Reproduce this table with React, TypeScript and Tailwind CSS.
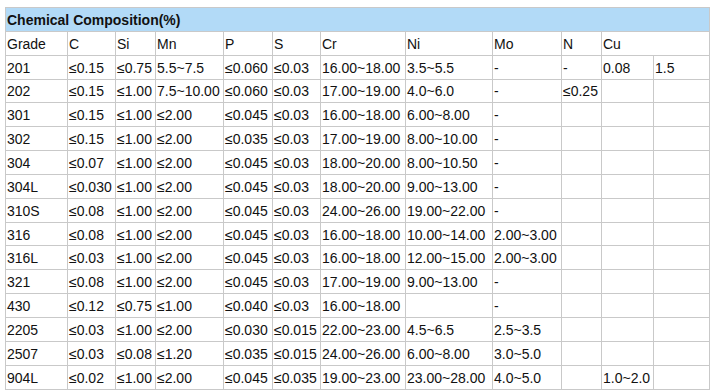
import React from 'react'

const widths = [62, 48, 40, 68, 49, 48, 85, 87, 69, 40, 52, 56]

const rows: string[][] = [
  ['201', '≤0.15', '≤0.75', '5.5~7.5', '≤0.060', '≤0.03', '16.00~18.00', '3.5~5.5', '-', '-', '0.08', '1.5'],
  ['202', '≤0.15', '≤1.00', '7.5~10.00', '≤0.060', '≤0.03', '17.00~19.00', '4.0~6.0', '-', '≤0.25', '', ''],
  ['301', '≤0.15', '≤1.00', '≤2.00', '≤0.045', '≤0.03', '16.00~18.00', '6.00~8.00', '-', '', '', ''],
  ['302', '≤0.15', '≤1.00', '≤2.00', '≤0.035', '≤0.03', '17.00~19.00', '8.00~10.00', '-', '', '', ''],
  ['304', '≤0.07', '≤1.00', '≤2.00', '≤0.045', '≤0.03', '18.00~20.00', '8.00~10.50', '-', '', '', ''],
  ['304L', '≤0.030', '≤1.00', '≤2.00', '≤0.045', '≤0.03', '18.00~20.00', '9.00~13.00', '-', '', '', ''],
  ['310S', '≤0.08', '≤1.00', '≤2.00', '≤0.045', '≤0.03', '24.00~26.00', '19.00~22.00', '-', '', '', ''],
  ['316', '≤0.08', '≤1.00', '≤2.00', '≤0.045', '≤0.03', '16.00~18.00', '10.00~14.00', '2.00~3.00', '', '', ''],
  ['316L', '≤0.03', '≤1.00', '≤2.00', '≤0.045', '≤0.03', '16.00~18.00', '12.00~15.00', '2.00~3.00', '', '', ''],
  ['321', '≤0.08', '≤1.00', '≤2.00', '≤0.045', '≤0.03', '17.00~19.00', '9.00~13.00', '-', '', '', ''],
  ['430', '≤0.12', '≤0.75', '≤1.00', '≤0.040', '≤0.03', '16.00~18.00', '', '-', '', '', ''],
  ['2205', '≤0.03', '≤1.00', '≤2.00', '≤0.030', '≤0.015', '22.00~23.00', '4.5~6.5', '2.5~3.5', '', '', ''],
  ['2507', '≤0.03', '≤0.08', '≤1.20', '≤0.035', '≤0.015', '24.00~26.00', '6.00~8.00', '3.0~5.0', '', '', ''],
  ['904L', '≤0.02', '≤1.00', '≤2.00', '≤0.045', '≤0.035', '19.00~23.00', '23.00~28.00', '4.0~5.0', '', '1.0~2.0', ''],
]

const headers = ['Grade', 'C', 'Si', 'Mn', 'P', 'S', 'Cr', 'Ni', 'Mo', 'N']

const cell = 'h-[23.85px] border border-[#c9c9c9] pl-[1px] pr-[2px] pt-[1px] align-middle whitespace-nowrap leading-none'

export default function App(): JSX.Element {
  return (
    <div className="w-[715px] h-[391px] bg-white pt-[7px] pl-[5px] font-['Liberation_Sans',Arial,sans-serif] text-[14px] text-[#111]">
      <table className="table-fixed border-collapse w-[705px]">
        <colgroup>
          {widths.map((w, i) => (
            <col key={i} style={{ width: w }} />
          ))}
        </colgroup>
        <tbody>
          <tr>
            <td colSpan={12} className={`${cell} bg-[#b2daf7] font-bold`}>
              Chemical Composition(%)
            </td>
          </tr>
          <tr>
            {headers.map((h) => (
              <td key={h} className={cell}>
                {h}
              </td>
            ))}
            <td colSpan={2} className={cell}>
              Cu
            </td>
          </tr>
          {rows.map((r) => (
            <tr key={r[0]}>
              {r.map((v, i) => (
                <td key={i} className={cell}>
                  {v}
                </td>
              ))}
            </tr>
          ))}
        </tbody>
      </table>
    </div>
  )
}
